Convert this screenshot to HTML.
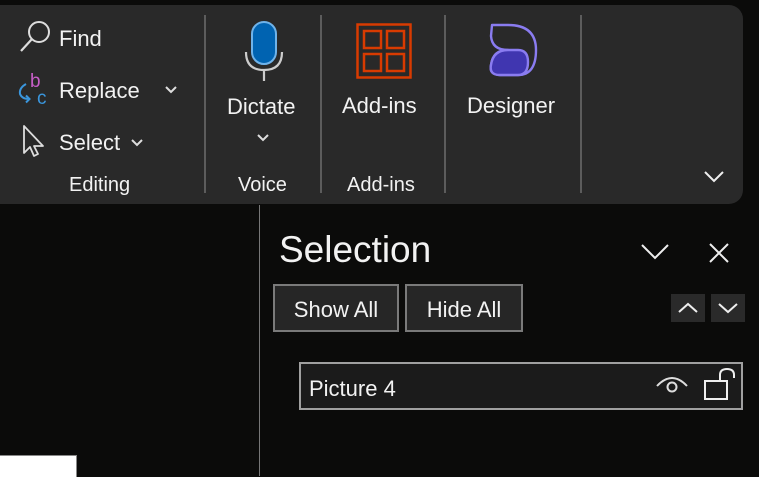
<!DOCTYPE html>
<html><head><meta charset="utf-8"><style>
body{margin:0;width:759px;height:476px;background:#0b0b0a;overflow:hidden;position:relative;font-family:"Segoe UI","Liberation Sans",sans-serif;color:#f2f2f2}
.a{position:absolute}
.rib{left:0;top:5px;width:743px;height:199px;background:#292929;border-radius:0 14px 14px 0}
.sep{width:2px;background:#5c5c5c;top:15px;height:178px}
.t{font-size:22px;white-space:nowrap}
.g{font-size:20px;white-space:nowrap}
.btn{border:2px solid #7a7a7a;background:#262626;font-size:22px;box-sizing:border-box;text-align:center;line-height:48px}
</style></head><body>
<div class="a rib"></div>
<div class="a sep" style="left:204px"></div>
<div class="a sep" style="left:320px"></div>
<div class="a sep" style="left:444px"></div>
<div class="a sep" style="left:580px"></div>

<svg class="a" style="left:18px;top:20px" width="34" height="34" viewBox="0 0 34 34"><circle cx="21" cy="12" r="10" fill="none" stroke="#ddd" stroke-width="2"/><path d="M14 19 L3 31" stroke="#ddd" stroke-width="2.2"/></svg>
<div class="a t" style="left:59px;top:26px">Find</div>
<svg class="a" style="left:16px;top:70px" width="34" height="36" viewBox="0 0 34 36"><text x="14" y="17" font-size="19" fill="#c65ec7" font-family="Liberation Sans">b</text><text x="21" y="34" font-size="19" fill="#3a96dd" font-family="Liberation Sans">c</text><path d="M10 14 Q3 18 4 24 Q6 29 13 29 M10 25.5 L13.5 29 L10 32.5" fill="none" stroke="#3a96dd" stroke-width="2"/></svg>
<div class="a t" style="left:59px;top:78px">Replace</div>
<svg class="a" style="left:164px;top:85px" width="14" height="10"><path d="M2 2 L7 7 L12 2" fill="none" stroke="#ddd" stroke-width="2"/></svg>
<svg class="a" style="left:22px;top:124px" width="24" height="34" viewBox="0 0 24 34"><path d="M2 2 L2 29 L8 23 L12 32 L16 30 L12 22 L21 22 Z" fill="none" stroke="#ddd" stroke-width="1.8" stroke-linejoin="round"/></svg>
<div class="a t" style="left:59px;top:130px">Select</div>
<svg class="a" style="left:130px;top:138px" width="14" height="10"><path d="M2 2 L7 7 L12 2" fill="none" stroke="#ddd" stroke-width="2"/></svg>
<div class="a g" style="left:69px;top:174px">Editing</div>

<svg class="a" style="left:244px;top:20px" width="42" height="62" viewBox="0 0 42 62"><rect x="8" y="2" width="24" height="42" rx="12" fill="#0063b1" stroke="#6fb3ea" stroke-width="2"/><path d="M2 32 Q2 50 20 50 Q38 50 38 32 M20 50 L20 61" fill="none" stroke="#ccc" stroke-width="2.2"/></svg>
<div class="a t" style="left:227px;top:94px">Dictate</div>
<svg class="a" style="left:256px;top:133px" width="14" height="10"><path d="M2 2 L7 7 L12 2" fill="none" stroke="#ddd" stroke-width="2"/></svg>
<div class="a g" style="left:238px;top:174px">Voice</div>

<svg class="a" style="left:356px;top:23px" width="56" height="56" viewBox="0 0 56 56"><g fill="none" stroke="#d83b01" stroke-width="2.5"><rect x="1.5" y="1.5" width="53" height="53"/><rect x="8" y="8" width="17" height="17"/><rect x="31" y="8" width="17" height="17"/><rect x="8" y="31" width="17" height="17"/><rect x="31" y="31" width="17" height="17"/></g></svg>
<div class="a t" style="left:342px;top:93px">Add-ins</div>
<div class="a g" style="left:347px;top:174px">Add-ins</div>

<svg class="a" style="left:488px;top:22px" width="52" height="56" viewBox="0 0 52 56"><path d="M4 3 L20 3 Q48 3 48 28 Q48 53 30 53 L12 53 Q1 53 3 43 Q5 28 20 28 Q4 28 3 14 Z" fill="none" stroke="#8a7cf0" stroke-width="2.4" stroke-linejoin="round"/><path d="M20 28 L30 28 Q40 28 40 40 Q40 53 30 53 L12 53 Q1 53 3 43 Q5 28 20 28 Z" fill="#4036b0" stroke="#8a7cf0" stroke-width="2.4"/></svg>
<div class="a t" style="left:467px;top:93px">Designer</div>
<svg class="a" style="left:703px;top:170px" width="22" height="14"><path d="M2 2 L11 11 L20 2" fill="none" stroke="#eee" stroke-width="2"/></svg>

<div class="a" style="left:259px;top:205px;width:1px;height:271px;background:#777"></div>
<div class="a" style="left:0;top:455px;width:76px;height:21px;background:#fff;border-right:1px solid #888;border-top:1px solid #888"></div>

<div class="a" style="left:279px;top:229px;font-size:37px;white-space:nowrap">Selection</div>
<svg class="a" style="left:640px;top:242px" width="30" height="20"><path d="M2 3 L15 16 L28 3" fill="none" stroke="#eee" stroke-width="2"/></svg>
<svg class="a" style="left:708px;top:242px" width="22" height="22"><path d="M2 2 L20 20 M20 2 L2 20" stroke="#eee" stroke-width="2"/></svg>
<div class="a btn" style="left:273px;top:284px;width:126px;height:48px">Show All</div>
<div class="a btn" style="left:405px;top:284px;width:118px;height:48px">Hide All</div>
<div class="a" style="left:671px;top:294px;width:34px;height:28px;background:#2a2a2a"></div>
<svg class="a" style="left:675px;top:299px" width="26" height="18"><path d="M4 13 L13 5 L22 13" fill="none" stroke="#eee" stroke-width="2"/></svg>
<div class="a" style="left:711px;top:294px;width:34px;height:28px;background:#2a2a2a"></div>
<svg class="a" style="left:715px;top:299px" width="26" height="18"><path d="M4 5 L13 13 L22 5" fill="none" stroke="#eee" stroke-width="2"/></svg>

<div class="a" style="left:299px;top:362px;width:444px;height:48px;border:2px solid #a0a0a0;background:#1b1b1b;box-sizing:border-box"></div>
<div class="a t" style="left:309px;top:376px">Picture 4</div>
<svg class="a" style="left:655px;top:373px" width="34" height="24"><path d="M2 13 Q17 -3 32 13" fill="none" stroke="#ddd" stroke-width="2"/><circle cx="17" cy="14" r="4.5" fill="none" stroke="#ddd" stroke-width="2"/></svg>
<svg class="a" style="left:703px;top:367px" width="36" height="34"><rect x="2" y="14" width="22" height="18" fill="none" stroke="#eee" stroke-width="2"/><path d="M17 14 L17 8 Q17 2 24 2 Q31 2 31 8 L31 11" fill="none" stroke="#eee" stroke-width="2"/></svg>
</body></html>
